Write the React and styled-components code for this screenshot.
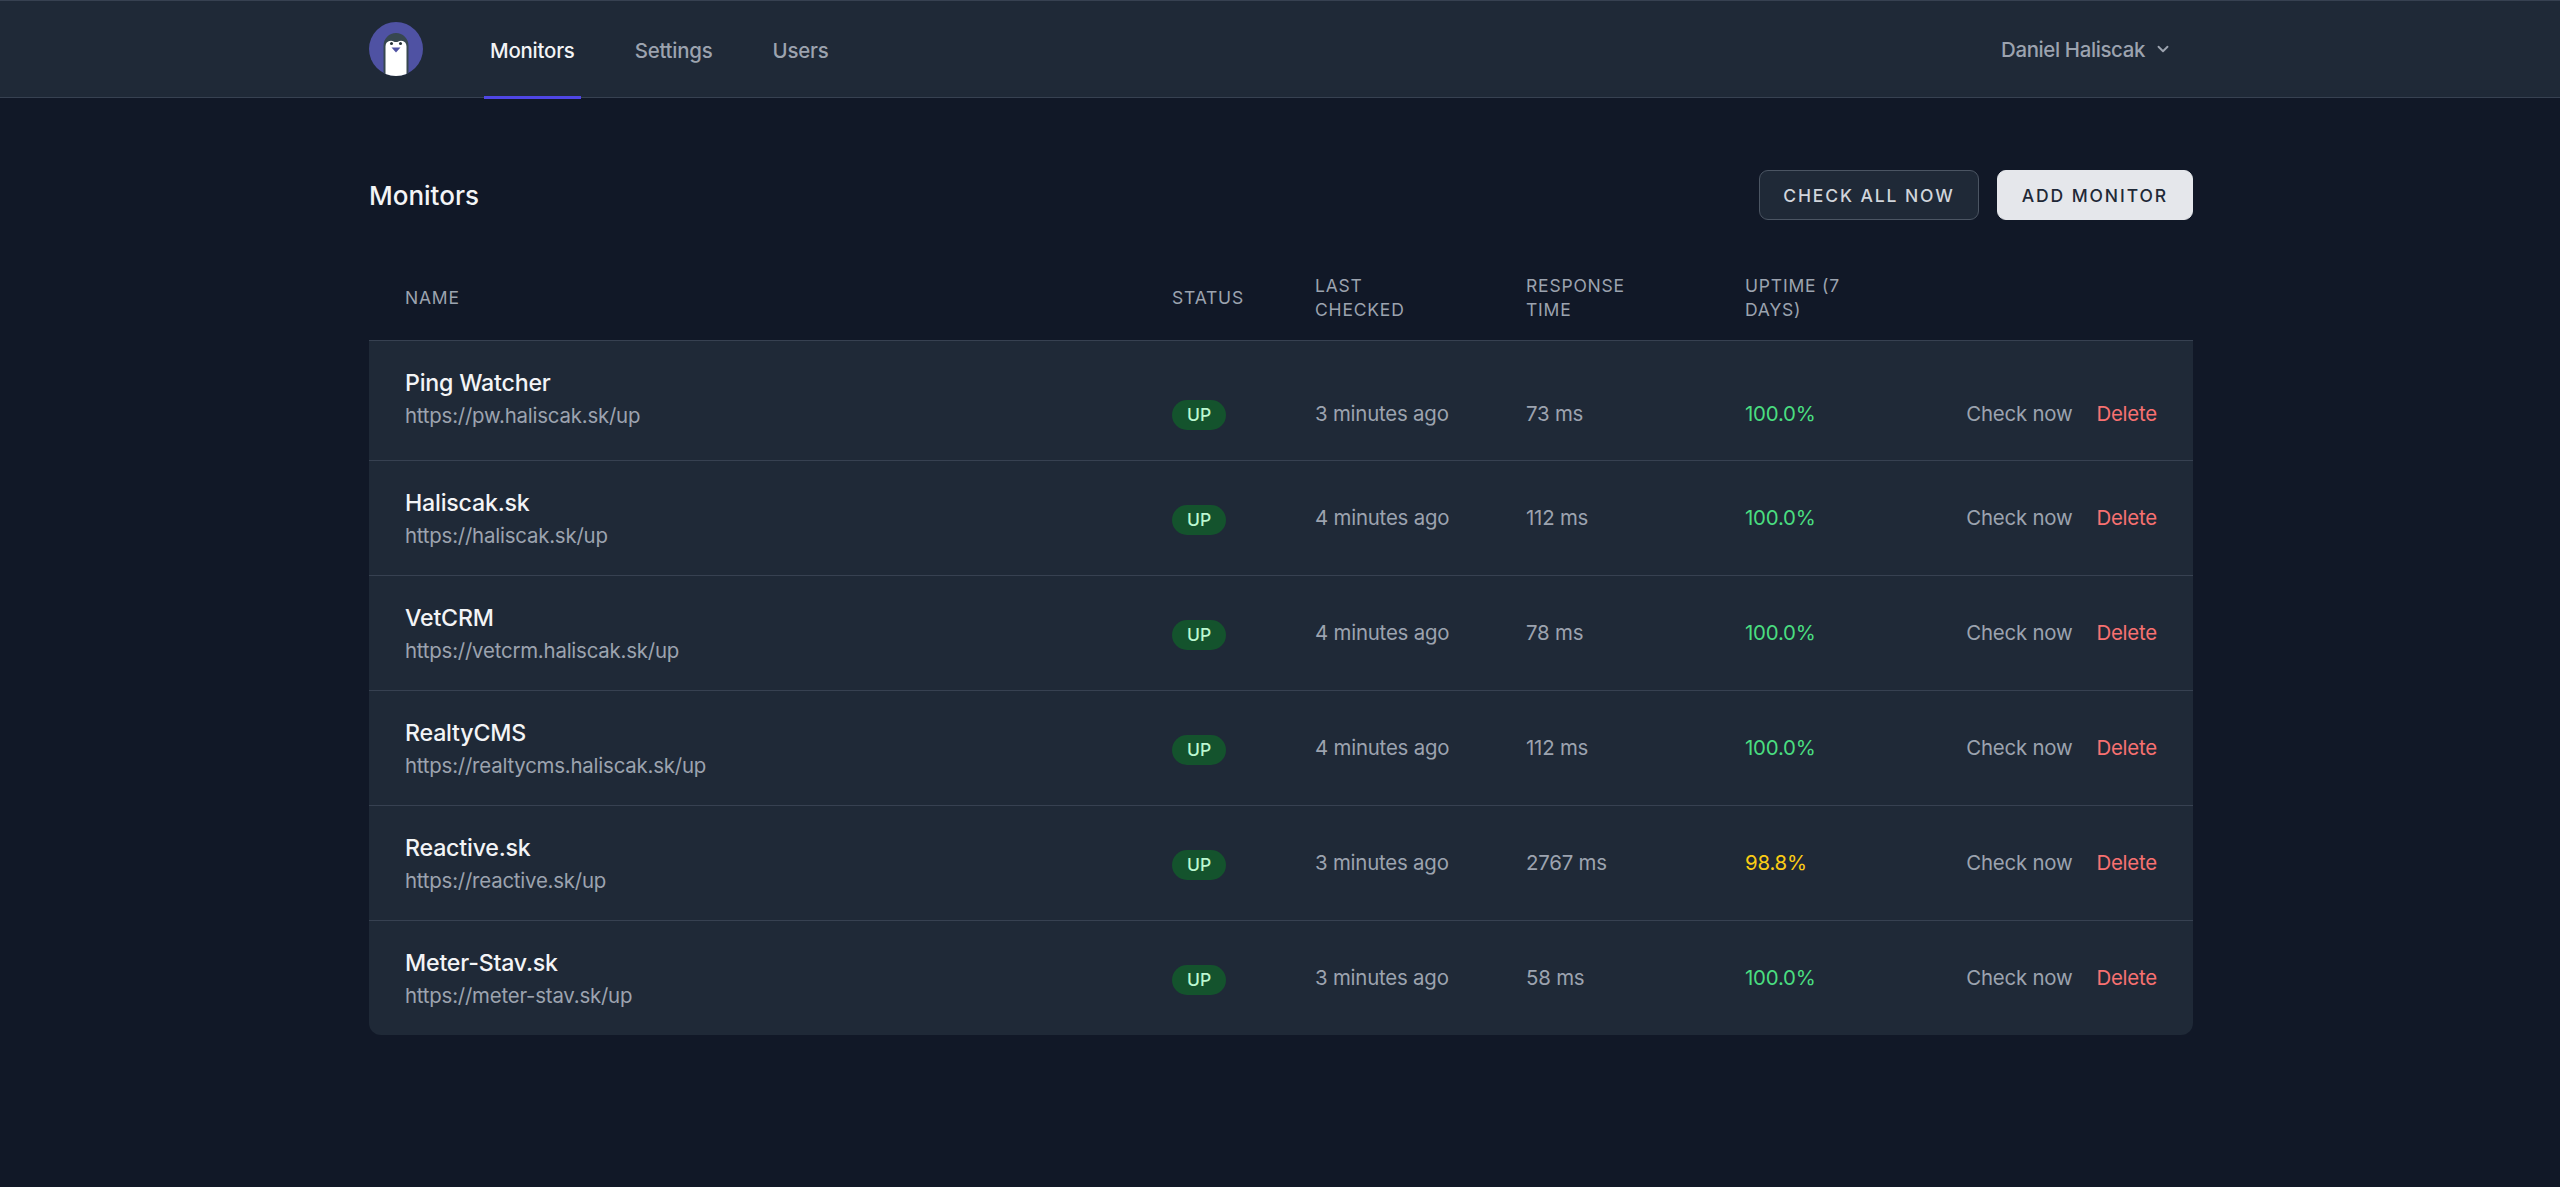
import styled, { createGlobalStyle } from "styled-components";
import { ChevronDown } from "lucide-react";

const GlobalStyle = createGlobalStyle`
  html, body {
    margin: 0;
    padding: 0;
    min-height: 100%;
    background-color: #111827;
    font-family: "Inter", "Noto Sans", sans-serif;
  }
`;

const Page = styled.div`
  min-height: 1187px;
  background-color: #111827;
`;

const Navbar = styled.nav`
  background-color: #1f2937;
  border-top: 1px solid #374151;
  border-bottom: 1px solid #374151;
  box-sizing: border-box;
  height: 98px;
`;

const NavInner = styled.div`
  width: 1824px;
  height: 100%;
  margin: 0 auto;
  padding-left: 2px;
  display: flex;
  justify-content: space-between;
  align-items: stretch;
`;

const NavLeft = styled.div`
  display: flex;
  align-items: center;
`;

const Logo = styled.svg`
  width: 54px;
  height: 54px;
  margin-right: 61px;
  flex-shrink: 0;
`;

const NavMenu = styled.div`
  display: flex;
  gap: 48px;
  align-self: stretch;
`;

const NavLink = styled.a`
  display: flex;
  align-items: center;
  padding: 3px 6px 0;
  margin-bottom: -2px;
  font-size: 20.4px;
  font-weight: 500;
  letter-spacing: -0.2px;
  color: ${(p) => (p.$active ? "#f3f4f6" : "#9ca3af")};
  border-bottom: 3px solid ${(p) => (p.$active ? "#4f46e5" : "transparent")};
`;

const UserMenu = styled.div`
  display: flex;
  align-items: center;
  gap: 9px;
  padding-right: 21px;
  font-size: 20.4px;
  font-weight: 500;
  letter-spacing: -0.35px;
  color: #9ca3af;
`;

const Main = styled.main`
  width: 1824px;
  margin: 0 auto;
  padding: 72px 0 0 2px;
`;

const TitleRow = styled.div`
  display: flex;
  justify-content: space-between;
  align-items: center;
  height: 50px;
`;

const Title = styled.h1`
  margin: 0;
  font-size: 26px;
  font-weight: 500;
  color: #f3f4f6;
`;

const Actions = styled.div`
  display: flex;
  gap: 18px;
`;

const Button = styled.button`
  height: 50px;
  padding: 0 ${(p) => (p.$primary ? "24px" : "23px")};
  box-sizing: border-box;
  border-radius: 9px;
  font-family: inherit;
  font-size: 17.5px;
  font-weight: 500;
  letter-spacing: 1.9px;
  color: ${(p) => (p.$primary ? "#1f2937" : "#d1d5db")};
  background-color: ${(p) => (p.$primary ? "#e5e7eb" : "#1f2937")};
  border: 1px solid ${(p) => (p.$primary ? "#e5e7eb" : "#4b5563")};
`;

const Table = styled.table`
  width: 100%;
  margin-top: 34px;
  border-collapse: separate;
  border-spacing: 0;
  table-layout: fixed;
`;

const HeadCell = styled.th`
  box-sizing: border-box;
  width: ${(p) => p.$width};
  padding: 20px 36px 18px;
  text-align: left;
  font-size: 17.5px;
  font-weight: 400;
  line-height: 24px;
  letter-spacing: 0.8px;
  color: #9ca3af;
  text-transform: uppercase;
  border-bottom: 1px solid #374151;
`;

const Row = styled.tr`
  background-color: #1f2937;

  &:not(:last-child) td {
    border-bottom: 1px solid #374151;
  }
  &:first-child td {
    padding-top: 57px;
    padding-bottom: 31px;
  }
  &:first-child td:first-child {
    vertical-align: top;
    padding-top: 24px;
    padding-bottom: 24px;
  }
  &:last-child td:first-child {
    border-bottom-left-radius: 12px;
  }
  &:last-child td:last-child {
    border-bottom-right-radius: 12px;
  }
`;

const Cell = styled.td`
  padding: 24px 36px;
  vertical-align: middle;
  font-size: 20.4px;
  line-height: 30px;
  letter-spacing: -0.2px;
  color: ${(p) => p.$color || "#9ca3af"};
  white-space: nowrap;
`;

const ActionCell = styled(Cell)`
  text-align: right;
`;

const Name = styled.div`
  font-size: 23.2px;
  line-height: 36px;
  font-weight: 500;
  letter-spacing: -0.2px;
  color: #f3f4f6;
`;

const Url = styled.div`
  font-size: 20.4px;
  line-height: 30px;
  color: #9ca3af;
`;

const Badge = styled.span`
  display: inline-flex;
  align-items: center;
  height: 30px;
  padding: 0 15px;
  position: relative;
  top: 1px;
  border-radius: 15px;
  background-color: #14532d;
  color: #bbf7d0;
  font-size: 17.5px;
  font-weight: 500;
  letter-spacing: 0;
`;

const ActionLink = styled.a`
  margin-left: 24px;
  color: ${(p) => (p.$danger ? "#f87171" : "#9ca3af")};
`;

const monitors = [
  { name: "Ping Watcher", url: "https://pw.haliscak.sk/up", checked: "3 minutes ago", time: "73 ms", uptime: "100.0%" },
  { name: "Haliscak.sk", url: "https://haliscak.sk/up", checked: "4 minutes ago", time: "112 ms", uptime: "100.0%" },
  { name: "VetCRM", url: "https://vetcrm.haliscak.sk/up", checked: "4 minutes ago", time: "78 ms", uptime: "100.0%" },
  { name: "RealtyCMS", url: "https://realtycms.haliscak.sk/up", checked: "4 minutes ago", time: "112 ms", uptime: "100.0%" },
  { name: "Reactive.sk", url: "https://reactive.sk/up", checked: "3 minutes ago", time: "2767 ms", uptime: "98.8%" },
  { name: "Meter-Stav.sk", url: "https://meter-stav.sk/up", checked: "3 minutes ago", time: "58 ms", uptime: "100.0%" },
];

function PenguinLogo() {
  return (
    <Logo viewBox="0 0 54 54">
      <defs>
        <clipPath id="logo-circle">
          <circle cx="27" cy="27" r="27" />
        </clipPath>
      </defs>
      <circle cx="27" cy="27" r="27" fill="#4f52a3" />
      <g clipPath="url(#logo-circle)">
        <path d="M14.500 54V23.500a12.500 12.500 0 0 1 25 0V54z" fill="#37474f" />
        <path d="M16.500 54V24.500c0-3 1.500-5 4-5.500 2.500-.5 4.500 1 6.500 1s4-1.500 6.500-1c2.500.5 4 2.500 4 5.500V54z" fill="#fff" />
        <circle cx="22" cy="21.500" r="2.800" fill="#fff" />
        <circle cx="32" cy="21.500" r="2.800" fill="#fff" />
        <circle cx="22.500" cy="21.500" r="1.500" fill="#263238" />
        <circle cx="31.500" cy="21.500" r="1.500" fill="#263238" />
        <path d="M22.500 25.500h9l-4.500 5z" fill="#4f52a3" />
      </g>
    </Logo>
  );
}

export default function App() {
  return (
    <Page>
      <GlobalStyle />
      <Navbar>
        <NavInner>
          <NavLeft>
            <PenguinLogo />
            <NavMenu>
              <NavLink $active>Monitors</NavLink>
              <NavLink>Settings</NavLink>
              <NavLink>Users</NavLink>
            </NavMenu>
          </NavLeft>
          <UserMenu>
            Daniel Haliscak
            <ChevronDown size={18} strokeWidth={2.5} />
          </UserMenu>
        </NavInner>
      </Navbar>
      <Main>
        <TitleRow>
          <Title>Monitors</Title>
          <Actions>
            <Button>CHECK ALL NOW</Button>
            <Button $primary>ADD MONITOR</Button>
          </Actions>
        </TitleRow>
        <Table>
          <thead>
            <tr>
              <HeadCell $width="767px">Name</HeadCell>
              <HeadCell $width="143px">Status</HeadCell>
              <HeadCell $width="211px">Last<br />checked</HeadCell>
              <HeadCell $width="219px">Response<br />time</HeadCell>
              <HeadCell $width="190px">Uptime (7<br />days)</HeadCell>
              <HeadCell />
            </tr>
          </thead>
          <tbody>
            {monitors.map((m) => (
              <Row key={m.name}>
                <Cell>
                  <Name>{m.name}</Name>
                  <Url>{m.url}</Url>
                </Cell>
                <Cell><Badge>UP</Badge></Cell>
                <Cell>{m.checked}</Cell>
                <Cell>{m.time}</Cell>
                <Cell $color={m.uptime === "100.0%" ? "#4ade80" : "#facc15"}>{m.uptime}</Cell>
                <ActionCell>
                  <ActionLink>Check now</ActionLink>
                  <ActionLink $danger>Delete</ActionLink>
                </ActionCell>
              </Row>
            ))}
          </tbody>
        </Table>
      </Main>
    </Page>
  );
}
